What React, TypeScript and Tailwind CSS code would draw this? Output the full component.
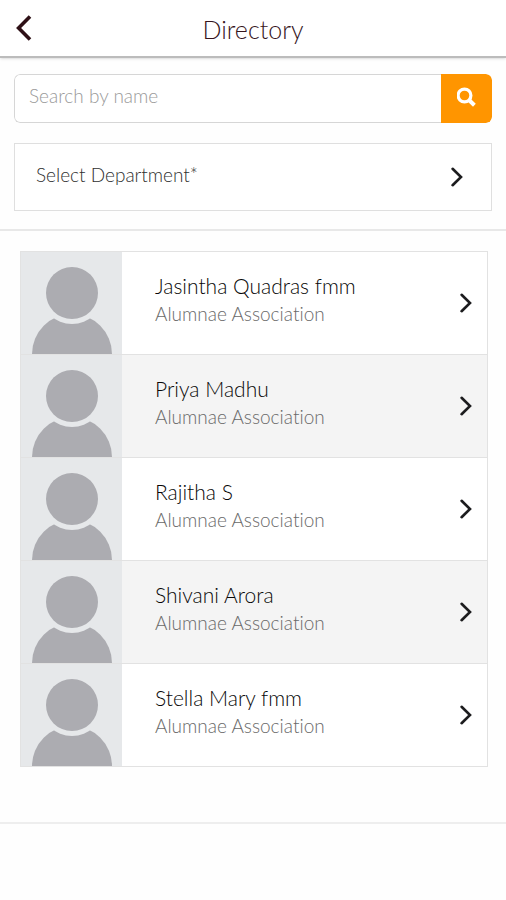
import React from "react";

const people = [
  "Jasintha Quadras fmm",
  "Priya Madhu",
  "Rajitha S",
  "Shivani Arora",
  "Stella Mary fmm",
];

function Chevron({ className = "" }: { className?: string }) {
  return (
    <svg
      viewBox="0 0 12 20"
      className={`h-5 w-3 shrink-0 fill-none stroke-[#1c1c1e] ${className}`}
      strokeWidth="2.6"
      strokeLinecap="round"
      strokeLinejoin="miter"
      aria-hidden="true"
    >
      <path d="M1.6 1.8 L10 10 L1.6 18.2" />
    </svg>
  );
}

function Avatar() {
  return (
    <svg
      viewBox="0 0 101 102"
      className="h-[102px] w-[101px] shrink-0 bg-[#e6e8ea]"
      aria-hidden="true"
    >
      <circle cx="51" cy="102" r="40" fill="#acacb1" />
      <circle cx="51" cy="41" r="31" fill="#e6e8ea" />
      <circle cx="51" cy="41" r="26" fill="#acacb1" />
    </svg>
  );
}

function PersonRow({ name }: { name: string }) {
  return (
    <li className="border-b border-[#e2e2e2] bg-white even:bg-[#f4f4f4]">
      <a href="#" className="flex items-center pr-[15px]">
        <Avatar />
        <span className="flex min-w-0 flex-1 flex-col pb-1.5 pl-[33px]">
          <span className="text-[21px] leading-7 text-[#080808]">{name}</span>
          <span className="text-[19px] leading-7 text-[#696969]">
            Alumnae Association
          </span>
        </span>
        <Chevron />
      </a>
    </li>
  );
}

export default function App() {
  return (
    <div className="min-h-screen bg-[#fefefe] font-['Lato','Liberation_Sans',sans-serif] font-light [font-variant-ligatures:none]">
      <header className="grid h-[58px] grid-cols-[48px_1fr_48px] items-center border-b-2 border-[#bcbcbc] bg-white shadow-sm">
        <button type="button" aria-label="Back" className="pl-4">
          <svg
            viewBox="0 0 16 26"
            className="h-[26px] w-4 fill-none stroke-[#2e1016]"
            strokeWidth="3.6"
            aria-hidden="true"
          >
            <path d="M14 1.5 L2.6 13 L14 24.5" />
          </svg>
        </button>
        <h1 className="pt-1 text-center text-[25px] text-[#36141c]">
          Directory
        </h1>
      </header>

      <main>
        <section className="flex flex-col gap-5 border-b-2 border-[#e8e8e8] px-[14px] pt-4 pb-[18px]">
          <form
            className="flex h-[49px] overflow-hidden rounded-md"
            onSubmit={(e) => e.preventDefault()}
          >
            <input
              type="text"
              aria-label="Search by name"
              placeholder="Search by name"
              className="min-w-0 flex-1 rounded-l-md border border-r-0 border-[#d6d6d6] bg-white px-[14px] pb-1 text-[19px] outline-none placeholder:text-[#9a9a9a]"
            />
            <button
              type="submit"
              aria-label="Search"
              className="flex w-[51px] items-center justify-center rounded-r-md bg-[#ff9500] pb-1"
            >
              <svg
                viewBox="0 0 20 20"
                className="h-5 w-5 fill-none stroke-white"
                aria-hidden="true"
              >
                <circle cx="7.5" cy="8.5" r="6.4" strokeWidth="3.2" />
                <path d="M12 13 L17.4 18.2" strokeWidth="4" />
              </svg>
            </button>
          </form>

          <div className="grid h-[68px] items-center border border-[#dfdfdf] bg-white">
            <select
              aria-label="Select Department"
              className="col-start-1 row-start-1 h-full w-full appearance-none bg-transparent pr-12 pb-1 pl-[21px] text-[19px] text-[#303030] outline-none"
            >
              <option>Select Department*</option>
            </select>
            <Chevron className="pointer-events-none col-start-1 row-start-1 mr-7 justify-self-end" />
          </div>
        </section>

        <section className="border-b-2 border-[#eeeeee] pt-5 pr-[18px] pb-[55px] pl-5">
          <ul className="border-x border-t border-[#e2e2e2]">
            {people.map((name) => (
              <PersonRow key={name} name={name} />
            ))}
          </ul>
        </section>
      </main>
    </div>
  );
}
